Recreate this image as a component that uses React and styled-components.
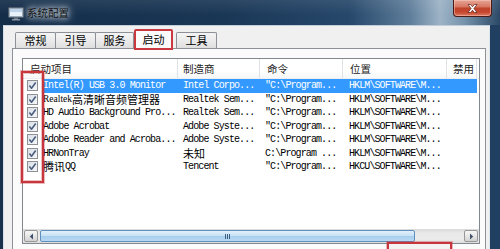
import React from 'react';
import styled, { createGlobalStyle } from 'styled-components';

const Global = createGlobalStyle`
  html, body { margin: 0; padding: 0; background: #1c3a5a; overflow: hidden; }
  body { font-family: "Noto Sans CJK SC", "Liberation Sans", sans-serif; }
  * { box-sizing: border-box; }
`;

const Window = styled.div`
  width: 500px;
  height: 249px;
  overflow: hidden;
  display: flex;
  flex-direction: column;
  background: linear-gradient(90deg, #17304c 0%, #1d3a5a 50%, #213f60 100%);
`;

const TitleBar = styled.div`
  height: 25px;
  flex: none;
  display: flex;
  align-items: flex-start;
  padding-left: 8px;
  background:
    linear-gradient(180deg, rgba(255,255,255,0.08) 0%, rgba(255,255,255,0) 60%),
    linear-gradient(90deg, #142d49 0%, #1a3756 45%, #27486b 70%, #5f7e9b 82%, #9db3c6 88%, #7592ab 93%, #2b4866 100%);
`;

const TitleIcon = styled.svg`
  margin-top: 7px;
  flex: none;
`;

const TitleText = styled.div`
  margin-left: 3px;
  margin-top: 5px;
  font-size: 10.5px;
  line-height: 16px;
  color: #111;
  text-shadow: 0 0 5px rgba(230, 236, 242, 0.95), 0 0 9px rgba(230, 236, 242, 0.8), 0 0 12px rgba(230,236,242,0.6);
`;

const CloseButton = styled.div`
  margin-left: auto;
  margin-right: 8px;
  width: 39px;
  height: 17px;
  border: 1px solid #4b1c17;
  border-top: none;
  border-radius: 0 0 4px 4px;
  background: linear-gradient(180deg, #e6a596 0%, #d77a66 40%, #c0432c 52%, #c4452e 75%, #de7a5f 100%);
  box-shadow: inset 0 0 0 1px rgba(255, 210, 200, 0.45);
  display: flex;
  align-items: center;
  justify-content: center;
`;

const FrameBody = styled.div`
  flex: 1;
  min-height: 0;
  display: flex;
  padding: 0 10px 0 3px;
`;

const Client = styled.div`
  flex: 1;
  min-width: 0;
  display: flex;
  flex-direction: column;
  background: #f0f0f0;
  border-left: 1px solid #d6e0ea;
  border-right: 1px solid #dfe7ee;
  border-top: 1px solid #c4ced8;
  padding: 3px 3px 0 8px;
`;

const TabRow = styled.div`
  display: flex;
  align-items: flex-start;
  height: 19px;
  flex: none;
  padding-left: 3px;
  position: relative;
  z-index: 2;
`;

const Tab = styled.div`
  width: ${p => p.$w}px;
  height: ${p => (p.$active ? 21 : 16)}px;
  margin-top: ${p => (p.$active ? 0 : 3)}px;
  margin-left: ${p => p.$ml || 0}px;
  border: ${p => (p.$active ? '2px solid #c9393f' : '1px solid #8d9097')};
  border-bottom: ${p => (p.$active ? '2px solid #c9393f' : 'none')};
  border-radius: 2px 2px 0 0;
  background: ${p => (p.$active ? '#fbfbfb' : 'linear-gradient(180deg, #f4f4f4 0%, #ebebeb 50%, #dedede 100%)')};
  font-size: 11px;
  line-height: ${p => (p.$active ? 16 : 15)}px;
  text-align: center;
  color: #000;
  flex: none;
`;

const Panel = styled.div`
  flex: 1;
  min-height: 0;
  display: flex;
  flex-direction: column;
  border: 1px solid #8d9097;
  border-bottom: none;
  background: #fbfbfb;
  padding: 9px 5px 0 9px;
`;

const ListView = styled.div`
  position: relative;
  height: 186px;
  flex: none;
  border: 1px solid #828790;
  background: #fff;
  display: grid;
  grid-template-rows: 20px 1fr 14px;
`;

const HeaderRow = styled.div`
  display: grid;
  grid-template-columns: 155px 82px 83px 104px 30px 1fr;
  background: linear-gradient(180deg, #ffffff 0%, #ffffff 60%, #f6f7f8 100%);
  border-bottom: 1px solid #eceef0;
`;

const HeaderCell = styled.div`
  padding-left: ${p => p.$pl}px;
  border-right: ${p => (p.$last ? 'none' : '1px solid #dfe2e6')};
  font-size: 10.5px;
  line-height: 19px;
  color: #1b1b1b;
  white-space: nowrap;
`;

const Rows = styled.div`
  min-height: 0;
`;

const Row = styled.div`
  display: grid;
  grid-template-columns: 20px 135px 82px 83px 104px 30px 1fr;
  height: 13.5px;
  line-height: 13.5px;
`;

const Cell = styled.div`
  padding-left: ${p => p.$pl || 0}px;
  background: ${p => (p.$selected ? '#3399ff' : 'transparent')};
  color: ${p => (p.$selected ? '#fff' : '#000')};
  white-space: nowrap;
  display: flex;
  align-items: center;
`;

const CheckCell = styled.div`
  padding-left: 4px;
  display: flex;
  align-items: center;
`;

const Mono = styled.span`
  font-family: "Liberation Mono", "Courier New", monospace;
  font-size: 10px;
  line-height: 11px;
  letter-spacing: -0.9px;
`;

const Cjk = styled.span`
  font-family: "Noto Sans CJK SC", sans-serif;
  font-size: 11px;
  line-height: 11px;
`;

const Serif = styled.span`
  font-family: "Liberation Serif", serif;
  font-size: 9.5px;
  line-height: 11px;
`;

const ScrollBar = styled.div`
  display: flex;
  align-items: stretch;
  background: linear-gradient(180deg, #dadada 0%, #e9e9e9 30%, #ececec 70%, #dedede 100%);
  padding: 1px;
`;

const ScrollBtn = styled.div`
  width: 14px;
  flex: none;
  border: 1px solid #979797;
  border-radius: 2px;
  background: linear-gradient(180deg, #f7f7f7 0%, #e6e6e6 50%, #d2d2d2 100%);
  display: flex;
  align-items: center;
  justify-content: center;
  margin-left: ${p => (p.$right ? 'auto' : '0')};
`;

const Thumb = styled.div`
  width: 375px;
  flex: none;
  margin-left: 2px;
  border: 1px solid #5f8fbf;
  border-radius: 2px;
  background: linear-gradient(180deg, #e2f0fb 0%, #c8e2f6 45%, #a9cfee 55%, #b8d8f2 100%);
  display: flex;
  align-items: center;
  justify-content: center;
`;

const Grip = styled.div`
  display: flex;
  gap: 1px;
  & > i {
    display: block;
    width: 1px;
    height: 5px;
    background: #3f5f80;
  }
`;

const CheckMarker = styled.div`
  position: absolute;
  left: -2px;
  top: 12px;
  width: 23px;
  height: 112px;
  border: 2px solid #c8363d;
  box-shadow: 0 0 0 1px rgba(200, 54, 61, 0.35), inset 0 0 0 1px rgba(200, 54, 61, 0.3);
  pointer-events: none;
`;

const ButtonRow = styled.div`
  display: flex;
  justify-content: flex-end;
  padding-right: 28px;
  margin-top: -2px;
  position: relative;
  z-index: 1;
`;

const MarkedButton = styled.div`
  width: 65px;
  height: 22px;
  border: 2px solid #c8363d;
  box-shadow: 0 0 0 1px rgba(200, 54, 61, 0.35);
  background: #f3f3f3;
`;

const Checkbox = () => (
  <svg width="11" height="11" viewBox="0 0 11 11">
    <defs>
      <linearGradient id="cbg" x1="0" y1="0" x2="1" y2="1">
        <stop offset="0" stopColor="#d9dee6" />
        <stop offset="1" stopColor="#f7f8fa" />
      </linearGradient>
    </defs>
    <rect x="0.5" y="0.5" width="10" height="10" fill="url(#cbg)" stroke="#8e9094" />
    <path d="M2.4 5.6 L4.5 8.2 L8.7 2.6" fill="none" stroke="#4a5e7e" strokeWidth="1.6" strokeLinejoin="round" />
  </svg>
);

const Arrow = ({ dir }) => (
  <svg width="5" height="7" viewBox="0 0 5 7">
    {dir === 'left'
      ? <path d="M4 0.5 L0.8 3.5 L4 6.5 Z" fill="#3d4f6b" />
      : <path d="M1 0.5 L4.2 3.5 L1 6.5 Z" fill="#3d4f6b" />}
  </svg>
);

const renderText = (t) => {
  if (typeof t === 'string') return <Mono>{t}</Mono>;
  return t.map(([k, s], i) => {
    if (k === 'c') return <Cjk key={i}>{s}</Cjk>;
    if (k === 's') return <Serif key={i}>{s}</Serif>;
    return <Mono key={i}>{s}</Mono>;
  });
};

const rows = [
  { name: 'Intel(R) USB 3.0 Monitor', maker: 'Intel Corpo...', cmd: '"C:\\Program...', loc: 'HKLM\\SOFTWARE\\M...', selected: true },
  { name: [['s', 'Realtek'], ['c', '高清晰音频管理器']], maker: 'Realtek Sem...', cmd: '"C:\\Program...', loc: 'HKLM\\SOFTWARE\\M...' },
  { name: 'HD Audio Background Pro...', maker: 'Realtek Sem...', cmd: '"C:\\Program...', loc: 'HKLM\\SOFTWARE\\M...' },
  { name: 'Adobe Acrobat', maker: 'Adobe Syste...', cmd: '"C:\\Program...', loc: 'HKLM\\SOFTWARE\\M...' },
  { name: 'Adobe Reader and Acroba...', maker: 'Adobe Syste...', cmd: '"C:\\Program...', loc: 'HKLM\\SOFTWARE\\M...' },
  { name: 'HRNonTray', maker: [['c', '未知']], cmd: 'C:\\Program ...', loc: 'HKLM\\SOFTWARE\\M...' },
  { name: [['c', '腾讯'], ['m', 'QQ']], maker: 'Tencent', cmd: '"C:\\Program...', loc: 'HKCU\\SOFTWARE\\M...' },
];

const tabs = [
  { label: '常规', w: 41, ml: 0 },
  { label: '引导', w: 41, ml: -1 },
  { label: '服务', w: 39, ml: -1 },
  { label: '启动', w: 39, ml: 0, active: true },
  { label: '工具', w: 41, ml: 3 },
];

export default function App() {
  return (
    <>
      <Global />
      <Window>
        <TitleBar>
          <TitleIcon width="16" height="14" viewBox="0 0 16 14">
            <rect x="0.5" y="0.5" width="15" height="10" rx="1" fill="#9aa7b5" stroke="#4f5d6c" />
            <rect x="2" y="2" width="12" height="7" fill="#e9f1f8" />
            <rect x="2" y="2" width="12" height="3" fill="#bcd3ea" />
            <rect x="6" y="10.5" width="4" height="1.5" fill="#6f7c89" />
            <rect x="4" y="12" width="8" height="1.5" fill="#9aa7b5" stroke="#4f5d6c" strokeWidth="0.5" />
          </TitleIcon>
          <TitleText>系统配置</TitleText>
          <CloseButton>
            <svg width="11" height="9" viewBox="0 0 11 9">
              <path d="M1 0.5 L3.6 0.5 L5.5 2.8 L7.4 0.5 L10 0.5 L6.9 4.5 L10 8.5 L7.4 8.5 L5.5 6.2 L3.6 8.5 L1 8.5 L4.1 4.5 Z"
                fill="#fff" stroke="#5a1d14" strokeWidth="0.7" strokeLinejoin="round" />
            </svg>
          </CloseButton>
        </TitleBar>
        <FrameBody>
          <Client>
            <TabRow>
              {tabs.map(t => (
                <Tab key={t.label} $w={t.w} $ml={t.ml} $active={t.active}>{t.label}</Tab>
              ))}
            </TabRow>
            <Panel>
              <ListView>
                <HeaderRow>
                  <HeaderCell $pl={7}>启动项目</HeaderCell>
                  <HeaderCell $pl={5}>制造商</HeaderCell>
                  <HeaderCell $pl={7}>命令</HeaderCell>
                  <HeaderCell $pl={7}>位置</HeaderCell>
                  <HeaderCell $pl={6}>禁用</HeaderCell>
                  <HeaderCell $last />
                </HeaderRow>
                <Rows>
                  {rows.map((r, i) => (
                    <Row key={i}>
                      <CheckCell><Checkbox /></CheckCell>
                      <Cell $selected={r.selected}>{renderText(r.name)}</Cell>
                      <Cell $selected={r.selected} $pl={5}>{renderText(r.maker)}</Cell>
                      <Cell $selected={r.selected} $pl={5}>{renderText(r.cmd)}</Cell>
                      <Cell $selected={r.selected} $pl={6}>{renderText(r.loc)}</Cell>
                      <Cell $selected={r.selected} />
                      <Cell />
                    </Row>
                  ))}
                </Rows>
                <ScrollBar>
                  <ScrollBtn><Arrow dir="left" /></ScrollBtn>
                  <Thumb>
                    <Grip><i /><i /><i /></Grip>
                  </Thumb>
                  <ScrollBtn $right><Arrow dir="right" /></ScrollBtn>
                </ScrollBar>
                <CheckMarker />
              </ListView>
              <ButtonRow>
                <MarkedButton />
              </ButtonRow>
            </Panel>
          </Client>
        </FrameBody>
      </Window>
    </>
  );
}
